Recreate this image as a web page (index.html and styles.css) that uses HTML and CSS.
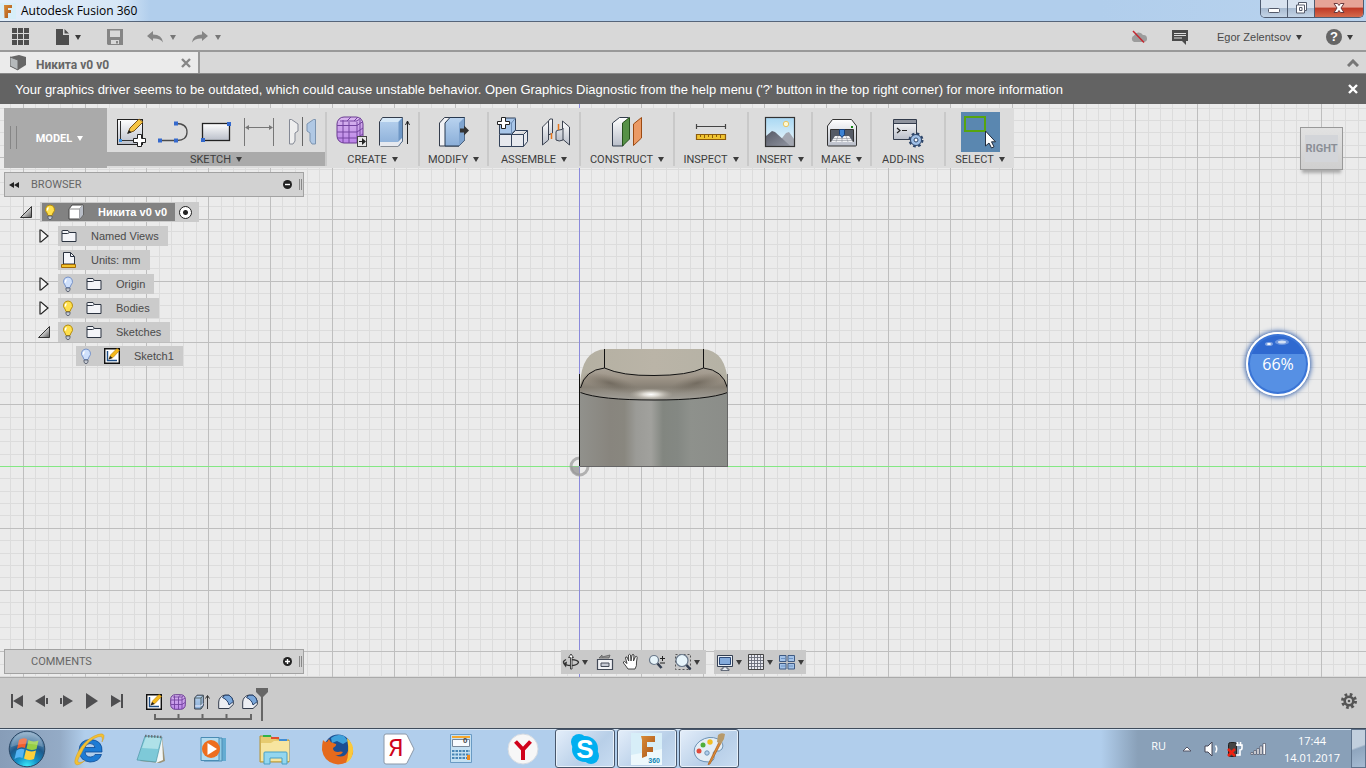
FILE: index.html
```html
<!DOCTYPE html>
<html lang="en">
<head>
    <meta charset="UTF-8">
    <meta name="viewport" content="width=device-width, initial-scale=1.0">
    <title>Autodesk Fusion 360</title>
    <link rel="stylesheet" href="styles.css">
</head>
<body>
    <!-- shared gradients and icons -->
    <svg class="defs" width="0" height="0" aria-hidden="true">
        <defs>
            <linearGradient id="g-white" x1="0" y1="0" x2="0" y2="1"><stop offset="0" stop-color="#fff"/><stop offset="1" stop-color="#b9bec9"/></linearGradient>
            <linearGradient id="g-blue" x1="0" y1="0" x2="0" y2="1"><stop offset="0" stop-color="#b9d3ef"/><stop offset="1" stop-color="#8aaed8"/></linearGradient>
            <linearGradient id="g-purple" x1="0" y1="0" x2="0" y2="1"><stop offset="0" stop-color="#d9b8ee"/><stop offset="1" stop-color="#bb84e8"/></linearGradient>
            <linearGradient id="g-sky" x1="0" y1="0" x2="0" y2="1"><stop offset="0" stop-color="#a9d8f3"/><stop offset="1" stop-color="#eef8fc"/></linearGradient>
            <linearGradient id="g-rock" x1="0" y1="0" x2="1" y2="1"><stop offset="0" stop-color="#565a66"/><stop offset="1" stop-color="#9296a2"/></linearGradient>
            <linearGradient id="g-orange" x1="0" y1="0" x2="1" y2="1"><stop offset="0" stop-color="#d98b35"/><stop offset="1" stop-color="#a9551b"/></linearGradient>
            <linearGradient id="g-tri" x1="0" y1="0" x2="1" y2="1"><stop offset="0.3" stop-color="#fff"/><stop offset="1" stop-color="#555"/></linearGradient>
        </defs>
        <symbol id="i-folder" viewBox="0 0 16 16">
            <path d="M1 13.500V3q0-.5.5-.5H7L8.500 4.500H15v9z" fill="#f3f4f8" stroke="#2b3340"/><path d="M1 5.500h5.500l2-1" fill="none" stroke="#2b3340"/>
        </symbol>
        <symbol id="i-bulb-on" viewBox="0 0 14 16">
            <path d="M7 1a4.600 4.600 0 0 0-3 8l1 2.500h4L10 9a4.600 4.600 0 0 0-3-8z" fill="#ffe04d" stroke="#b58c0c"/><path d="M5.500 3.500q-1.500 1-1 3" stroke="#fff" stroke-width="1.500" fill="none"/><path d="M5 12h4v2l-1 1.500H6L5 14z" fill="#c3c8d1" stroke="#4c5466" stroke-width=".8"/>
        </symbol>
        <symbol id="i-bulb-off" viewBox="0 0 14 16">
            <path d="M7 1a4.600 4.600 0 0 0-3 8l1 2.500h4L10 9a4.600 4.600 0 0 0-3-8z" fill="#cfe0fb" stroke="#7793c9"/><path d="M5.500 3.500q-1.500 1-1 3" stroke="#fff" stroke-width="1.500" fill="none"/><path d="M5 12h4v2l-1 1.500H6L5 14z" fill="#c3c8d1" stroke="#4c5466" stroke-width=".8"/>
        </symbol>
        <symbol id="i-sketch" viewBox="0 0 16 16">
            <path d="M1 1h14v14H1z" fill="#fff"/><path d="M.7.700h14.600v14.600H.7z" fill="none" stroke="#111" stroke-width="1.400"/><path d="M3.500 3v9.500H13" fill="none" stroke="#1f4f87" stroke-width="1.400"/><path d="m5 11 1.500-4L13 .5l2.500 2L9 9.500z" fill="#f5b91b" stroke="#b37908" stroke-width=".6"/><path d="m4.500 11.500 1.700-3.500L8.500 10z" fill="#222"/>
        </symbol>
        <symbol id="i-form" viewBox="0 0 16 16">
            <rect x=".7" y=".7" width="14.600" height="14.600" rx="4.500" fill="url(#g-purple)" stroke="#6a3b91"/><path d="M1 6h11l3-2M1 10.500h11l3-2M4.500 1.500v13.500M8.500 3v12M12 3v12M3 3h9l1.500-2M8.500 3l2-2" fill="none" stroke="#7444a0" stroke-width=".9"/>
        </symbol>
        <symbol id="i-extrude" viewBox="0 0 16 16">
            <path d="M.7 4 3 1.200h6.300v10.500L7 15H.7z" fill="url(#g-blue)" stroke="#333c4c"/><path d="M.7 4H7v11M7 4l2.300-2.800" fill="none" stroke="#566"/><path d="M1 12h6l2-2.500" fill="none" stroke="#eef"/><path d="M13.500 15V2m-2 2.500 2-3 2 3" fill="none" stroke="#333"/>
        </symbol>
        <symbol id="i-fillet" viewBox="0 0 16 16">
            <path d="M.7 14.500V8Q1 3 6 1.200h5Q14.500 3 15.300 7.500v3L11 14.500z" fill="#eceef3" stroke="#333c4c"/><path d="M4.500 3.500 7 1.200h4Q14.500 3 15.300 7.500L11 11q-1-5-6.500-7.500z" fill="#7aa7da" stroke="#27416a"/>
        </symbol>
    </svg>

    <header class="titlebar">
        <svg class="title-icon" width="16" height="16" viewBox="0 0 16 16"><rect width="16" height="16" fill="#d7eef8"/><path d="M4 2h8v3H8v2h3v3H8v5H4.500z" fill="url(#g-orange)"/></svg>
        <span class="title">Autodesk Fusion 360</span>
        <div class="window-buttons">
            <button type="button" aria-label="Minimize"><svg width="14" height="14" viewBox="0 0 14 14"><rect x="1.500" y="6.500" width="11" height="4" rx="1" fill="#fff" stroke="#555b6b"/></svg></button>
            <button type="button" aria-label="Restore"><svg width="14" height="14" viewBox="0 0 14 14"><path d="M4.500.5h8v8h-2V11h-8V3h2z" fill="#fff" stroke="#555b6b"/><path d="M4.500 3h6v5.500M5.500 5.500h2.500v3H5.500z" fill="none" stroke="#555b6b"/></svg></button>
            <button type="button" class="close" aria-label="Close"><svg width="14" height="14" viewBox="0 0 14 14"><path d="M2 1.500h3.500L7 3.500l1.500-2H12L9 6l3 4.500H8.500L7 8.500l-1.500 2H2L5 6z" fill="#fff" stroke="#6b3a3e"/></svg></button>
        </div>
    </header>

    <nav class="appbar">
        <button type="button" class="app-btn grid-btn" aria-label="Data panel"><svg width="18" height="18" viewBox="0 0 18 18"><path d="M0 0h5v5H0zM6 0h5v5H6zM12 0h5v5h-5zM0 6h5v5H0zM6 6h5v5H6zM12 6h5v5h-5zM0 12h5v5H0zM6 12h5v5H6zM12 12h5v5h-5z" fill="#4e4e4e"/></svg></button>
        <button type="button" class="app-btn file-btn" aria-label="File"><svg width="14" height="16" viewBox="0 0 14 16"><path d="M0 0h7v6h6v10H0zM8.500 0 13 4.500H8.500z" fill="#4e4e4e"/></svg><i class="caret"></i></button>
        <button type="button" class="app-btn save-btn" aria-label="Save"><svg width="16" height="16" viewBox="0 0 16 16"><path d="M0 0h16v16H1l-1-1z" fill="#858585"/><path d="M3 1.500h10V8H3zM4 11h8v4H4z" fill="#d8d8d8"/><path d="M9 12h2v2.500H9z" fill="#858585"/></svg></button>
        <button type="button" class="app-btn undo-btn" aria-label="Undo"><svg width="16" height="12" viewBox="0 0 16 12"><path d="M0 5 6 0v3.500q9 0 10 8-3-4.500-10-4V10z" fill="#858585"/></svg><i class="caret faded"></i></button>
        <button type="button" class="app-btn redo-btn" aria-label="Redo"><svg width="16" height="12" viewBox="0 0 16 12"><path d="M16 5 10 0v3.500q-9 0-10 8 3-4.500 10-4V10z" fill="#858585"/></svg><i class="caret faded"></i></button>
        <div class="account">
            <button type="button" class="app-btn" aria-label="Offline"><svg width="18" height="14" viewBox="0 0 18 14"><path d="M4 12a3.500 3.500 0 0 1 0-6.500 5 5 0 0 1 9-.5 3.500 3.500 0 0 1 1 7z" fill="#9c9c9c"/><path d="m3 1 11 11.500" stroke="#c5262f" stroke-width="1.500"/></svg></button>
            <button type="button" class="app-btn" aria-label="Comments"><svg width="16" height="15" viewBox="0 0 16 15"><path d="M0 0h16v11h-2v4l-4-4H0z" fill="#4a4a4a"/><path d="M2 3.500h12M2 5.500h12M2 8h8" stroke="#ddd"/></svg></button>
            <button type="button" class="app-btn user">Egor Zelentsov<i class="caret"></i></button>
            <button type="button" class="app-btn help" aria-label="Help"><span class="help-mark">?</span><i class="caret"></i></button>
        </div>
    </nav>

    <div class="tabs">
        <div class="tab">
            <svg width="16" height="16" viewBox="0 0 16 16"><path d="M0 2 9 0l7 2v8l-8 5-8-4z" fill="#666"/><path d="m0 2 8 3v10l-8-4z" fill="#b5b9bb" stroke="#666"/></svg>
            <span class="tab-name">Никита v0 v0</span>
            <button type="button" aria-label="Close tab"><svg width="10" height="10" viewBox="0 0 10 10"><path d="m1 1 8 8M9 1 1 9" stroke="#868686" stroke-width="2.400"/></svg></button>
        </div>
        <button type="button" class="collapse" aria-label="Collapse"><svg width="12" height="8" viewBox="0 0 12 8"><path d="m1 7 5-5 5 5" fill="none" stroke="#777" stroke-width="3"/></svg></button>
    </div>

    <div class="notice">
        <span>Your graphics driver seems to be outdated, which could cause unstable behavior. Open Graphics Diagnostic from the help menu ('?' button in the top right corner) for more information</span>
        <button type="button" aria-label="Dismiss"><svg width="10" height="10" viewBox="0 0 10 10"><path d="m1 1 8 8M9 1 1 9" stroke="#fff" stroke-width="2.400"/></svg></button>
    </div>

    <main class="canvas">
        <svg class="scene" width="100%" height="100%">
            <defs>
                <linearGradient id="m-side"><stop offset="0" stop-color="#91918c"/><stop offset=".2" stop-color="#88857e"/><stop offset=".3" stop-color="#89877f"/><stop offset=".38" stop-color="#9b9b97"/><stop offset=".48" stop-color="#a1a19d"/><stop offset=".56" stop-color="#828680"/><stop offset=".66" stop-color="#848883"/><stop offset=".75" stop-color="#8e918c"/><stop offset="1" stop-color="#8b8d89"/></linearGradient>
                <linearGradient id="m-top"><stop offset="0" stop-color="#b4b0a2"/><stop offset=".5" stop-color="#bab4a7"/><stop offset="1" stop-color="#b5b2a5"/></linearGradient>
                <linearGradient id="m-band" x1="0" y1="0" x2="0" y2="1"><stop offset="0" stop-color="#aaa398"/><stop offset=".3" stop-color="#9e9588"/><stop offset=".6" stop-color="#878075"/><stop offset="1" stop-color="#a3a09a"/></linearGradient>
                <radialGradient id="m-shine"><stop offset="0" stop-color="#fff"/><stop offset=".35" stop-color="#e4e1da" stop-opacity=".9"/><stop offset="1" stop-color="#b7b1a6" stop-opacity="0"/></radialGradient>
                <radialGradient id="m-dark"><stop offset="0" stop-color="#5e574c" stop-opacity=".6"/><stop offset="1" stop-color="#756e63" stop-opacity="0"/></radialGradient>
            </defs>
            <g id="grid"></g>
            <g id="model" transform="translate(580 362)">
                <circle cx="-.5" cy=".5" r="8.500" fill="none" stroke="#999" stroke-opacity=".7" stroke-width="3"/>
                <path d="M-.5.5v9a9 9 0 0 1-9-9z" fill="#999" fill-opacity=".8"/>
                <path d="M0 .5V-74Q74-58 148-74V.5z" fill="url(#m-side)"/>
                <path d="M0-80Q1-116 26-117H122Q147-116 148-80L123-85H25z" fill="url(#m-top)"/>
                <path d="M25-98Q42-90 74-90.500 108-90.500 123.500-98 145-96 148-76V-73.500Q128-66 74-66 20-66 0-73.500V-78Q2-96 25-98z" fill="url(#m-band)"/>
                <ellipse cx="30" cy="-83" rx="30" ry="8" transform="rotate(14 30 -83)" fill="url(#m-dark)"/>
                <ellipse cx="117" cy="-83" rx="30" ry="8" transform="rotate(-14 117 -83)" fill="url(#m-dark)"/>
                <ellipse cx="71" cy="-71.500" rx="22" ry="6" fill="url(#m-shine)"/>
                <path d="M24.500-117V-98Q42-90 74-90.500 108-90.500 123.500-98V-117M24.500-98Q5-96 .5-78M123.500-98Q143-96 147.500-78M.5-73.500Q20-66 74-66 128-66 147.500-73.500" fill="none" stroke="#111" stroke-width="1"/>
                <path d="M-.5 0V-92" stroke="#111"/>
                <path d="M147.500 0V-92M0 .5H148" stroke="#666" fill="none"/>
            </g>
        </svg>

        <div class="toolbar">
            <button type="button" class="workspace">MODEL<i class="caret"></i></button>
            <section class="group active">
                <div class="tools">
                    <button type="button" aria-label="Create sketch"><svg width="32" height="32" viewBox="0 0 32 32"><rect x="3.500" y="3.500" width="25" height="25" fill="url(#g-white)" stroke="#222"/><path d="M6.500 5v19.500H20" fill="none" stroke="#333"/><path d="M5 23h3v3H5z" fill="#3f8fe0"/><path d="m14 17 2-5 9-9 4 3-9 9z" fill="#f6c543" stroke="#7a5517"/><path d="m13 18 2-4 2.500 2.500z" fill="#222"/><path d="M23.500 18.500h4v4h4v4h-4v4h-4v-4h-4v-4h4z" fill="#fff" stroke="#222"/></svg></button>
                    <button type="button" aria-label="Line"><svg width="32" height="32" viewBox="0 0 32 32"><path d="M3 24.500h17q10 0 10-8.500t-11-8.500" fill="none" stroke="#4b4b4b" stroke-width="1.300"/><path d="M1 22.500h4v4H1zM17 22.500h4v4h-4zM17 5.500h4v4h-4z" fill="#3469cd"/></svg></button>
                    <button type="button" aria-label="Rectangle"><svg width="32" height="32" viewBox="0 0 32 32"><rect x="2.500" y="7.500" width="27" height="17" fill="url(#g-white)" stroke="#222" stroke-width="1.300"/><path d="M1 22h4v4H1zM27 6h4v4h-4z" fill="#3469cd"/></svg></button>
                    <button type="button" aria-label="Dimension"><svg width="32" height="32" viewBox="0 0 32 32"><path d="M1.500 2v28M30.500 2v28M3 11.500h26" stroke="#777" fill="none"/><path d="m2 11.500 4-2.500v5zM30 11.500 26 9v5z" fill="#777"/></svg></button>
                    <button type="button" aria-label="Mirror"><svg width="32" height="32" viewBox="0 0 32 32"><path d="M3.500 3.500h2L12 8v7l-3 2v8l-2 3H3.500z" fill="#eee" stroke="#848995"/><path d="M29.500 3.500h-2L21 8v7l3 2v8l2 3h3.500z" fill="#b0c8e4" stroke="#7c94b0"/><path d="M16.500 1v29" stroke="#666"/></svg></button>
                </div>
                <button type="button" class="group-label">SKETCH<i class="caret"></i></button>
            </section>
            <section class="group">
                <div class="tools">
                    <button type="button" aria-label="Create form"><svg width="32" height="32" viewBox="0 0 32 32"><rect x="2" y="1" width="26" height="26" rx="7" fill="url(#g-purple)" stroke="#6a3b91"/><path d="M2 9.500h20l6-4M2 16h20l6-4M2 22h20l6-4M8 4v23M14 6v21M22 6v21M5 5h17l4-3M12 5l4-4M19 5l4-4M25 4v20" fill="none" stroke="#7444a0"/><rect x="22.500" y="20.500" width="9" height="10" fill="#e6e6e6" stroke="#444"/><path d="M24 25h3v-3l4 3.500-4 3.500v-3h-3z" fill="#222"/></svg></button>
                    <button type="button" aria-label="Extrude"><svg width="32" height="32" viewBox="0 0 32 32"><path d="m1.500 6 3-4.500h20V25l-4 5h-18l-1-1z" fill="url(#g-blue)" stroke="#333c4c"/><path d="m2 6 3-4h19l-4 4z" fill="#d6e8f7"/><path d="M20.500 6v24l4-5V1.500z" fill="#6e97c6"/><path d="M2 26h18l4-4v3l-4 5H2z" fill="#e6e9ef"/><path d="M29.500 28V5m-2 4 2-4 2 4" fill="none" stroke="#222"/></svg></button>
                </div>
                <button type="button" class="group-label">CREATE<i class="caret"></i></button>
            </section>
            <section class="group">
                <div class="tools">
                    <button type="button" aria-label="Press pull"><svg width="32" height="32" viewBox="0 0 32 32"><path d="m1.500 7 5-5.500h20V24l-5.500 6H1.500z" fill="#f1f2f5" stroke="#333c4c"/><path d="m7 7 5-5.500h14.500V24L21 30H7z" fill="url(#g-blue)" stroke="#26384f"/><path d="M21 7v23l5.500-6V1.500z" fill="#7fa4cf"/><path d="M22 12.500h4V9.500l5 5-5 5v-3h-4z" fill="#333"/></svg></button>
                </div>
                <button type="button" class="group-label">MODIFY<i class="caret"></i></button>
            </section>
            <section class="group">
                <div class="tools">
                    <button type="button" aria-label="New component"><svg width="32" height="32" viewBox="0 0 32 32"><path d="m2.500 7 4-5h12v12l-4 4h-12z" fill="#a8c6e9" stroke="#33425a"/><path d="M14.500 18V7l4-5M2.500 7h12" fill="none" stroke="#6f8fb7"/><path d="M2.500 18.500h12v12h-12zM14.500 18.500l4-4h12v11l-4 5h-12zM14.500 18.500h12l4-4M26.500 18.500v12" fill="#e7e9ee" stroke="#33425a"/><path d="M4.500 1.500h4v4h4v3h-4v4h-4v-4h-4v-3h4z" fill="#fff" stroke="#222"/></svg></button>
                    <button type="button" aria-label="Joint"><svg width="32" height="32" viewBox="0 0 32 32"><path d="m2.500 11 6-6v19l-6 5zM22.500 5l7 6v18l-7-6z" fill="url(#g-white)" stroke="#3b4250"/><path d="M8.500 5q1-3 4-2v14l-4 2zM16 16q0-2 3-2 4 0 4-2v12q-4 2-7 0z" fill="url(#g-white)" stroke="#3b4250"/><path d="M11.500 17v6M18.500 8v6" stroke="#e6761c" stroke-width="1.500"/></svg></button>
                </div>
                <button type="button" class="group-label">ASSEMBLE<i class="caret"></i></button>
            </section>
            <section class="group">
                <div class="tools">
                    <button type="button" aria-label="Offset plane"><svg width="32" height="32" viewBox="0 0 32 32"><path d="m1.500 7 7-5.500h9L12 30H1.500z" fill="url(#g-white)" stroke="#333c4c"/><path d="m11.500 7 7-5.500V23l-7 7z" fill="#569146" stroke="#26521c"/><path d="m22.500 8 8-6.500V22l-8 7.500z" fill="#eb9a65" stroke="#9c4a12"/></svg></button>
                </div>
                <button type="button" class="group-label">CONSTRUCT<i class="caret"></i></button>
            </section>
            <section class="group">
                <div class="tools">
                    <button type="button" aria-label="Measure"><svg width="32" height="32" viewBox="0 0 32 32"><path d="M1.500 8v5M30.500 8v5M1.500 10.500h29" stroke="#444" stroke-width="1.200"/><path d="M1.500 18.500h29v5h-29z" fill="#f0c431" stroke="#8e5c0a" stroke-width="1.200"/><path d="M5.500 19v2M9.500 19v3M13.500 19v2M17.500 19v3M21.500 19v2M25.500 19v3" stroke="#8e5c0a"/></svg></button>
                </div>
                <button type="button" class="group-label">INSPECT<i class="caret"></i></button>
            </section>
            <section class="group">
                <div class="tools">
                    <button type="button" aria-label="Insert picture"><svg width="32" height="32" viewBox="0 0 32 32"><rect x="1.500" y="1.500" width="29" height="29" fill="url(#g-sky)"/><circle cx="22" cy="8" r="2.700" fill="#fff8d0" stroke="#e5c568"/><path d="m12 30 10-13 3-1 5 7v7z" fill="#a3a7b1"/><path d="M2 20 8 15l3 1 16 14.500H2z" fill="url(#g-rock)"/><rect x="1.500" y="1.500" width="29" height="29" fill="none" stroke="#333" stroke-width="1.200"/></svg></button>
                </div>
                <button type="button" class="group-label">INSERT<i class="caret"></i></button>
            </section>
            <section class="group">
                <div class="tools">
                    <button type="button" aria-label="3D print"><svg width="32" height="32" viewBox="0 0 32 32"><path d="m1.500 10 5-6.500h19l5 6.500v19q0 1-1 1h-27q-1 0-1-1z" fill="url(#g-white)" stroke="#333"/><path d="M4.500 13.500h23v12h-23z" fill="#555b66" stroke="#333"/><path d="m5 26 4-6h14l4 6z" fill="#f0f1f3"/><path d="M7 22.500h18M6 24.500h20M12 20l-2 6M20 20l2 6M16 20v6" stroke="#8d929b" stroke-width=".6"/><path d="M13.500 13.500h5v5L16 21.500l-2.500-3z" fill="#3c83d4" stroke="#17407b"/><path d="M25 10h2v2h-2z" fill="#148514"/></svg></button>
                </div>
                <button type="button" class="group-label">MAKE<i class="caret"></i></button>
            </section>
            <section class="group">
                <div class="tools">
                    <button type="button" aria-label="Scripts and add-ins"><svg width="32" height="32" viewBox="0 0 32 32"><path d="M1.500 3.500h23v20h-23z" fill="url(#g-white)" stroke="#333c4c"/><path d="M2 4h22v3H2z" fill="#8e939e"/><path d="M2 7.500h22" stroke="#333c4c"/><path d="m5 12 3 2.500L5 17M10 14.500h5" fill="none" stroke="#222" stroke-width="1.200"/><circle cx="24" cy="24" r="6" fill="none" stroke="#2d4569" stroke-width="3" stroke-dasharray="2.500 2.200"/><circle cx="24" cy="24" r="5.500" fill="#9fbfe6" stroke="#2d4569"/><circle cx="24" cy="24" r="2" fill="#fff" stroke="#2d4569"/></svg></button>
                </div>
                <button type="button" class="group-label no-menu">ADD-INS</button>
            </section>
            <section class="group">
                <div class="tools">
                    <button type="button" class="pressed" aria-label="Select"><svg width="32" height="36" viewBox="0 0 32 36"><rect x="1" y="3" width="20" height="14" fill="none" stroke="#57a50e" stroke-width="2"/><path d="M21.500 17v15l3.500-3 2.500 5 2.500-1.200-2.500-5h4z" fill="#fff" stroke="#1f2a3a"/></svg></button>
                </div>
                <button type="button" class="group-label">SELECT<i class="caret"></i></button>
            </section>
        </div>

        <aside class="browser">
            <div class="panel-head">
                <svg width="10" height="6" viewBox="0 0 10 6"><path d="M5 0v6L0 3zM10 0v6L5 3z" fill="#222"/></svg>
                <h2>BROWSER</h2>
                <button type="button" aria-label="Collapse browser"><svg width="9" height="9" viewBox="0 0 9 9"><circle cx="4.500" cy="4.500" r="4.500" fill="#222"/><path d="M2 4.500h5" stroke="#fff" stroke-width="1.400"/></svg></button>
                <span class="grip"></span>
            </div>
            <ul class="tree">
                <li>
                    <div class="row">
                        <button type="button" class="twisty" aria-label="Collapse"><svg width="12" height="12" viewBox="0 0 12 12"><path d="M11.500.5v11H.5z" fill="url(#g-tri)" stroke="#333"/></svg></button>
                        <div class="chip root">
                            <span class="root-name">
                                <svg class="bulb"><use href="#i-bulb-on"/></svg>
                                <svg class="icon" viewBox="0 0 16 16"><path d="M1 5 4 1h11v10l-3.500 4H1z" fill="#fff" stroke="#444"/><path d="M1 5h10.500v10M11.500 5 15 1" fill="none" stroke="#888"/><path d="M11.500 5 15 1v10l-3.500 4z" fill="#b9bec8"/></svg>
                                Никита v0 v0
                            </span>
                            <input type="radio" name="active" aria-label="Activate component" checked>
                        </div>
                    </div>
                    <ul>
                        <li><div class="row"><button type="button" class="twisty" aria-label="Expand"><svg width="10" height="14" viewBox="0 0 10 14"><path d="M1 1h1l7 6-7 6H1z" fill="#f4f4f4" stroke="#222" stroke-width="1.200"/></svg></button><div class="chip"><svg class="icon"><use href="#i-folder"/></svg>Named Views</div></div></li>
                        <li><div class="row"><span class="twisty"></span><div class="chip"><svg class="icon" viewBox="0 0 16 16"><path d="M2.500 12V.5h7l4 4V12z" fill="#f5f6fa" stroke="#2b3340"/><path d="M9.500.5v4h4" fill="none" stroke="#2b3340"/><path d="M.5 12.500h14v3H.5z" fill="#f3c22b" stroke="#a36c08"/></svg>Units: mm</div></div></li>
                        <li><div class="row"><button type="button" class="twisty" aria-label="Expand"><svg width="10" height="14" viewBox="0 0 10 14"><path d="M1 1h1l7 6-7 6H1z" fill="#f4f4f4" stroke="#222" stroke-width="1.200"/></svg></button><div class="chip"><svg class="bulb"><use href="#i-bulb-off"/></svg><svg class="icon"><use href="#i-folder"/></svg>Origin</div></div></li>
                        <li><div class="row"><button type="button" class="twisty" aria-label="Expand"><svg width="10" height="14" viewBox="0 0 10 14"><path d="M1 1h1l7 6-7 6H1z" fill="#f4f4f4" stroke="#222" stroke-width="1.200"/></svg></button><div class="chip"><svg class="bulb"><use href="#i-bulb-on"/></svg><svg class="icon"><use href="#i-folder"/></svg>Bodies</div></div></li>
                        <li>
                            <div class="row"><button type="button" class="twisty" aria-label="Collapse"><svg width="12" height="12" viewBox="0 0 12 12"><path d="M11.500.5v11H.5z" fill="url(#g-tri)" stroke="#333"/></svg></button><div class="chip"><svg class="bulb"><use href="#i-bulb-on"/></svg><svg class="icon"><use href="#i-folder"/></svg>Sketches</div></div>
                            <ul>
                                <li><div class="row"><span class="twisty"></span><div class="chip"><svg class="bulb"><use href="#i-bulb-off"/></svg><svg class="icon"><use href="#i-sketch"/></svg>Sketch1</div></div></li>
                            </ul>
                        </li>
                    </ul>
                </li>
            </ul>
        </aside>

        <div class="panel-head comments">
            <h2>COMMENTS</h2>
            <button type="button" aria-label="Add comment"><svg width="9" height="9" viewBox="0 0 9 9"><circle cx="4.500" cy="4.500" r="4.500" fill="#222"/><path d="M2 4.500h5M4.500 2v5" stroke="#fff" stroke-width="1.400"/></svg></button>
            <span class="grip"></span>
        </div>

        <button type="button" class="viewcube"><span>RIGHT</span></button>
        <div class="memory"><span>66%</span><svg width="30" height="12" viewBox="0 0 30 12"><ellipse cx="8" cy="7" rx="4" ry="2" fill="#fff" fill-opacity=".4"/><ellipse cx="8" cy="7" rx="2" ry="1" fill="#fff"/><ellipse cx="21" cy="5" rx="7" ry="3" fill="#fff" fill-opacity=".3"/><ellipse cx="21" cy="5" rx="4" ry="1.500" fill="#fff" fill-opacity=".7"/></svg></div>

        <div class="navbar">
            <div class="nav-group">
                <button type="button" aria-label="Orbit"><svg width="18" height="18" viewBox="0 0 18 18"><path d="M4 6.500Q1 8 1.500 9.500 3 12.500 9 12.500t7.500-3Q16.500 7 9 6.500" fill="none" stroke="#333" stroke-width="1.300"/><path d="m5 8.500-1 6-3-4z" fill="#333"/><path d="M9 1 6.500 4.500h2V16h1.500V4.500h1.500z" fill="#fff" stroke="#333" stroke-width=".9"/></svg><i class="caret"></i></button>
                <button type="button" aria-label="Look at"><svg width="18" height="18" viewBox="0 0 18 18"><path d="M1.500 6.500h15v10h-15z" fill="#f1f2f5" stroke="#444b58" stroke-width="1.200"/><path d="M5 10h8v3.500H5z" fill="#c8ccd6" stroke="#444b58"/><path d="M3 5 6 2v2l8-2-1 3z" fill="#999" stroke="#555" stroke-width=".7"/></svg></button>
                <button type="button" aria-label="Pan"><svg width="18" height="18" viewBox="0 0 18 18"><path d="M6 16Q4 13 1.500 10 1 8.500 2.500 8.500L5 10.500 3.500 5Q3.500 3.500 5 4l1.700 4L6.500 2Q7.500.7 8.500 2l.5 6 1-6q1-1.300 2 0L11.500 8l2-4.500q1.500-.7 1.700.8L14.500 9Q15 13 13 16z" fill="#fff" stroke="#333" stroke-width=".9"/></svg></button>
                <button type="button" aria-label="Zoom"><svg width="18" height="18" viewBox="0 0 18 18"><circle cx="6" cy="7" r="4.500" fill="#e7f4fa" stroke="#69788a" stroke-width="1.200"/><path d="m9.500 10.500 4 4.500" stroke="#333e50" stroke-width="2.600"/><path d="M12 5.500h5M14.500 3v5M12 10h5" stroke="#222"/></svg></button>
                <button type="button" aria-label="Fit"><svg width="18" height="18" viewBox="0 0 18 18"><path d="M1.500 1.500h15v15h-15z" fill="none" stroke="#555" stroke-dasharray="2 2"/><circle cx="8" cy="7.500" r="6" fill="#e7f4fa" stroke="#69788a" stroke-width="1.200"/><path d="m12.500 12 4 4.500" stroke="#333e50" stroke-width="2.600"/></svg><i class="caret"></i></button>
            </div>
            <div class="nav-group">
                <button type="button" aria-label="Display settings"><svg width="18" height="18" viewBox="0 0 18 18"><path d="M1.500 2.500h15v11h-15z" fill="#e8edf3" stroke="#333e50"/><path d="M3.500 4.500h11v7h-11z" fill="#84abdc" stroke="#2b4978"/><path d="M7 14h4v2h2v1.500H5V16h2z" fill="#e8edf3" stroke="#333e50" stroke-width=".7"/></svg><i class="caret"></i></button>
                <button type="button" aria-label="Grid and snaps"><svg width="18" height="18" viewBox="0 0 18 18"><path d="M1.500 1.500h15v15h-15z" fill="#e9eaf0" stroke="#444"/><path d="M4.500 2v14M7.500 2v14M10.500 2v14M13.500 2v14M2 4.500h14M2 7.500h14M2 10.500h14M2 13.500h14" stroke="#666a76" stroke-width=".9"/></svg><i class="caret"></i></button>
                <button type="button" aria-label="Viewports"><svg width="18" height="18" viewBox="0 0 18 18"><path d="M1.500 2.500h6.500v6h-6.500zM10 2.500h6.500v6H10zM1.500 10.500h6.500v5.500h-6.500zM10 10.500h6.500v5.500H10z" fill="#a3c2e8" stroke="#3f5a83"/><path d="M3 5.500h4M11 5.500h4M3 13h4M11 13h4" stroke="#6c92c4"/></svg><i class="caret"></i></button>
            </div>
        </div>
    </main>

    <footer class="timeline">
        <div class="player">
            <button type="button" aria-label="Go to start"><svg width="14" height="14" viewBox="0 0 14 14"><path d="M1 0h2v14H1zM13 1v12L3 7z" fill="#4e4e50"/></svg></button>
            <button type="button" aria-label="Step back"><svg width="14" height="14" viewBox="0 0 14 14"><path d="M10 1v12L0 7zM11 4h2v6h-2z" fill="#4e4e50"/></svg></button>
            <button type="button" aria-label="Step forward"><svg width="14" height="14" viewBox="0 0 14 14"><path d="M3 1v12l10-6zM0 4h2v6H0z" fill="#4e4e50"/></svg></button>
            <button type="button" aria-label="Play"><svg width="14" height="16" viewBox="0 0 14 16"><path d="M1 0v16l12-8z" fill="#4e4e50"/></svg></button>
            <button type="button" aria-label="Go to end"><svg width="14" height="14" viewBox="0 0 14 14"><path d="M11 0h2v14h-2zM1 1v12l10-6z" fill="#4e4e50"/></svg></button>
        </div>
        <div class="features">
            <div class="feature-row">
                <button type="button" aria-label="Sketch1"><svg><use href="#i-sketch"/></svg></button>
                <button type="button" aria-label="Form"><svg><use href="#i-form"/></svg></button>
                <button type="button" aria-label="Extrude"><svg><use href="#i-extrude"/></svg></button>
                <button type="button" aria-label="Fillet"><svg><use href="#i-fillet"/></svg></button>
                <button type="button" aria-label="Fillet"><svg><use href="#i-fillet"/></svg></button>
            </div>
            <svg class="ruler" width="98" height="6" viewBox="0 0 98 6"><path d="M1 0v5h96V0M24.500 0v5M48.500 0v5M72.500 0v5" fill="none" stroke="#666" stroke-width="2"/></svg>
            <svg class="marker" width="12" height="33" viewBox="0 0 12 33"><path d="M0 0h12v4L7 9v24H5V9L0 4z" fill="#666"/></svg>
        </div>
        <button type="button" class="settings" aria-label="Settings"><svg width="18" height="18" viewBox="0 0 18 18"><circle cx="9" cy="9" r="6.500" fill="none" stroke="#555" stroke-width="3" stroke-dasharray="2.600 2.500"/><circle cx="9" cy="9" r="4.300" fill="none" stroke="#555" stroke-width="2.600"/><circle cx="9" cy="9" r="1.300" fill="#555"/></svg></button>
    </footer>

    <div class="taskbar">
        <button type="button" class="start" aria-label="Start"><svg width="38" height="38" viewBox="0 0 38 38">
            <defs><radialGradient id="orb" cx=".5" cy="1" r="1"><stop offset="0" stop-color="#3cf0fb"/><stop offset=".3" stop-color="#1593c9"/><stop offset=".6" stop-color="#1d5a8c"/><stop offset="1" stop-color="#8fadc8"/></radialGradient></defs>
            <circle cx="19" cy="19" r="17.800" fill="url(#orb)" stroke="#2a4765"/>
            <path d="M11 10q4-3 8-1l-2 9q-4-2-8 1z" fill="#f0602f"/><path d="M20.500 10q4 2.500 10 .5l-2 8.500q-5.500 2-10-.5z" fill="#97cf43"/><path d="M8.500 20.500q4-3 8-1l-2 8.500q-4-2-8 1z" fill="#55b4f4"/><path d="M18 20q4.500 2.500 10 .5L26 29q-5.500 2-10-.5z" fill="#ffd03b"/>
            <path d="M3 17Q5 3 19 2.500 33 3 35 17 19 10 3 17z" fill="#fff" fill-opacity=".2"/></svg></button>
        <button type="button" class="task" aria-label="Internet Explorer"><svg width="34" height="34" viewBox="0 0 34 34"><path d="M30 20H13q.5 5 5.500 5 3.500 0 4.500-2.500h6.500Q27 30 18 30 7.500 29 7 18.500 7.500 8 18 7.500 31 8 30 20zM13 15.500h10q-.5-4-5-4t-5 4z" fill="#1d7bd4" stroke="#0c4a95" stroke-width=".8"/><path d="M9 22Q3 31 8 30.500q2 0 5-2-5 4.500-8 4.500-5-1 1-13Q12 9 22 4q9-4 10-.5.500 2.500-2 6.500 1-5-1-5.500-2-.5-7 2Q13 12 9 22z" fill="#f3c033" stroke="#c9921a" stroke-width=".4"/></svg></button>
        <button type="button" class="task" aria-label="Notepad"><svg width="34" height="34" viewBox="0 0 34 34"><path d="m28 5 3 24-5 2-20-2z" fill="#9c9478"/><path d="M10 5 28 4l1 24-7 3z" fill="#f3f7f7"/><path d="m11 4 17 1-6 25-19-2z" fill="#7ec9d8" stroke="#4d97a6" stroke-width=".7"/><path d="m12 5 15 1-3 11L8 16z" fill="#c4ebf0" fill-opacity=".7"/><path d="m11 4 17 1" stroke="#6a7076" stroke-width="2.500" stroke-dasharray="1.500 1.500"/></svg></button>
        <button type="button" class="task" aria-label="Media Player"><svg width="34" height="34" viewBox="0 0 34 34"><path d="M10 6h20v23H10z" fill="#64acd2"/><path d="M8 6h18v23H8z" fill="#91cbe4" stroke="#4a8cb4"/><path d="M5 5.500h18v23H5z" fill="#b3dcef" stroke="#4a8cb4"/><circle cx="15" cy="17" r="9" fill="#ee6e1e"/><path d="m11.500 11 9.500 6-9.500 6z" fill="#fff"/></svg></button>
        <button type="button" class="task" aria-label="Explorer"><svg width="34" height="34" viewBox="0 0 34 34"><path d="M2 4h10l3 2 10 2h6v22H2z" fill="#e7cb70" stroke="#b59438"/><path d="M5 3h8v2H5z" fill="#2fb34a"/><path d="M13 5h8v2h-8z" fill="#e04d2f"/><path d="M21 7h8v2h-8z" fill="#408dd5"/><path d="M3 11h10l3-2h15v20H3z" fill="#f7e5a0"/><path d="M6 32V21q0-1 1-1h21q1 0 1 1v11h-5v-6H12v6z" fill="#93d6ef" stroke="#499fc5"/></svg></button>
        <button type="button" class="task" aria-label="Firefox"><svg width="34" height="34" viewBox="0 0 34 34"><circle cx="18" cy="16" r="13.500" fill="#1d4f92"/><path d="M11 6q6-5 13-2l4 5-5 3-6-3-5 2z" fill="#3fa2db"/><path d="M3 8q1 2 4 2l2-3q1 3 4 4l3 1q1 2-3 4 0 4 5 4 3-1 5 0-3 4-8 3 8 4 12-2Q30 16 28 9q6 6 5 12-3 11-15 11.500Q4 31 2 18 2 12 3 8z" fill="#e56a1c"/><path d="M27 6q7 6 6 14-1 8-7 11 4-9 1-25z" fill="#fbc93b"/></svg></button>
        <button type="button" class="task" aria-label="Yandex"><svg width="34" height="34" viewBox="0 0 34 34"><path d="M4 2h19q1.500 0 2 1l7 14-7 14q-.5 1-2 1H4q-2 0-2-2V4q0-2 2-2z" fill="#fff" stroke="#8b98a8"/></svg><span class="ya">Я</span></button>
        <button type="button" class="task" aria-label="Calculator"><svg width="34" height="34" viewBox="0 0 34 34"><path d="M6.500 2.500h21v28h-21z" fill="#c4e0f2" stroke="#6a9bc4"/><path d="M8 4h18v2H8z" fill="#f6a82e"/><path d="M8.500 7.500h17v7h-17z" fill="#f7fbfe" stroke="#789"/><path d="M8 19h18M8 22.500h18M8 26h18" stroke="#4986b5" stroke-width="2" stroke-dasharray="2.500 1"/><path d="M23 23h3v5h-3z" fill="#f08a1c"/></svg><span class="digit">0</span></button>
        <button type="button" class="task" aria-label="Yandex Browser"><svg width="34" height="34" viewBox="0 0 34 34"><circle cx="17" cy="17" r="15" fill="#f7f7f7" stroke="#d5dbe2"/><path d="m9.500 9.500 7.500 8 7.500-8M17 17v11" fill="none" stroke="#d0021b" stroke-width="4"/></svg></button>
        <button type="button" class="task open" aria-label="Skype"><svg width="34" height="34" viewBox="0 0 34 34"><circle cx="17" cy="17" r="13" fill="#00aff0"/><circle cx="11" cy="10" r="8" fill="#00aff0"/><circle cx="23" cy="24" r="8" fill="#00aff0"/></svg><span class="skype">S</span></button>
        <button type="button" class="task open" aria-label="Fusion 360"><svg width="34" height="34" viewBox="0 0 34 34"><path d="M1 1h31v32H1z" fill="#d7eef8"/><path d="M1 23 32 17v16H1z" fill="#edf8fc"/><path d="M11 4h14v6h-8v5h6v5h-6v4l-5 2V8z" fill="url(#g-orange)"/></svg><span class="f360">360</span></button>
        <button type="button" class="task open" aria-label="Paint"><svg width="34" height="34" viewBox="0 0 34 34"><path d="M3 23Q0 15 8 9q9-6 18-2 7 4 4 10-2 3-7 2-3 1-1 5 1 5-5 6Q6 30 3 23z" fill="#e4edf5" stroke="#6d93b5"/><circle cx="7" cy="19" r="2.500" fill="#e04b3b"/><circle cx="11" cy="13" r="2.500" fill="#4fae39"/><circle cx="18" cy="10" r="2.700" fill="#f2bd22"/><circle cx="15" cy="21" r="2.200" fill="#b1ceec" stroke="#6d93b5"/><path d="m27 10 2 1-11 21-2 .5z" fill="#e08a36" stroke="#a65c18" stroke-width=".7"/><path d="m25 10 1-7q3-3 7-1l-1 5-3 5z" fill="#b79a6b"/></svg></button>
        <div class="tray">
            <span class="lang">RU</span>
            <button type="button" aria-label="Hidden icons"><svg width="10" height="6" viewBox="0 0 10 6"><path d="M1 5 5 1l4 4z" fill="#fff" stroke="#556"/></svg></button>
            <button type="button" aria-label="Volume"><svg width="16" height="18" viewBox="0 0 16 18"><path d="M1 6h3l4-4v14l-4-4H1z" fill="#fff" stroke="#445"/><path d="M11.500 5.500q2.500 3.500 0 7" fill="none" stroke="#fff" stroke-width="1.500"/></svg></button>
            <button type="button" aria-label="Power"><svg width="16" height="18" viewBox="0 0 16 18"><rect x="1.500" y="2.500" width="8" height="14" rx="2" fill="#444" stroke="#222"/><path d="M9 5h6v3q0 2-2 2v5H9M10.500 2v4M13.500 2v4" fill="none" stroke="#fff" stroke-width="1.600"/><path d="m1 9 7 7M8 9l-7 7" stroke="#e21" stroke-width="2.500"/></svg></button>
            <button type="button" aria-label="Network"><svg width="17" height="14" viewBox="0 0 17 14"><path d="M1 10.500h2v2H1zM4 8.500h2v4H4zM7 6.500h2v6H7zM10 4h2v8.500h-2zM13 1.500h2.500v11H13z" fill="#fff" stroke="#445" stroke-width=".6"/></svg></button>
            <div class="clock"><time>17:44</time><span>14.01.2017</span></div>
            <button type="button" class="show-desktop" aria-label="Show desktop"></button>
        </div>
    </div>

    <script>
        // Sketch plane grid, drawn outward from the origin
        const NS = 'http://www.w3.org/2000/svg';
        const scene = document.querySelector('.scene');
        const grid = document.getElementById('grid');
        const origin = { x: 579, y: 362 };
        const step = 61.8 / 5;

        function addLine(x1, y1, x2, y2, color) {
            const line = document.createElementNS(NS, 'line');
            line.setAttribute('x1', x1);
            line.setAttribute('y1', y1);
            line.setAttribute('x2', x2);
            line.setAttribute('y2', y2);
            line.setAttribute('stroke', color);
            grid.appendChild(line);
        }

        function drawGrid() {
            const w = scene.clientWidth;
            const h = scene.clientHeight;
            grid.innerHTML = '';
            for (const major of [false, true]) {
                const color = major ? '#bebebe' : '#dcdcdc';
                for (let i = Math.ceil(-origin.x / step); origin.x + i * step < w; i++) {
                    const x = Math.round(origin.x + i * step) + 0.5;
                    if ((i % 5 === 0) === major) addLine(x, 0, x, h, color);
                }
                for (let i = Math.ceil(-origin.y / step); origin.y + i * step < h; i++) {
                    const y = Math.round(origin.y + i * step) + 0.5;
                    if ((i % 5 === 0) === major) addLine(0, y, w, y, color);
                }
            }
            addLine(0, origin.y + 0.5, w, origin.y + 0.5, '#83e883');
            addLine(origin.x + 0.5, 0, origin.x + 0.5, h, '#8a8adb');
        }

        window.addEventListener('resize', drawGrid);
        drawGrid();
    </script>
</body>
</html>
```
FILE: styles.css
```css
* {
    box-sizing: border-box;
}
body {
    display: flex;
    flex-direction: column;
    min-height: 100vh;
    margin: 0;
    font-family: "Liberation Sans", Arial, sans-serif;
    font-size: 11px;
    color: #4a4a4a;
    background: #ebebeb;
}
button {
    display: flex;
    align-items: center;
    justify-content: center;
    margin: 0;
    padding: 0;
    border: 0;
    background: none;
    color: inherit;
    font: inherit;
}
svg {
    display: block;
    flex: none;
}
ul {
    list-style: none;
    margin: 0;
    padding: 0;
}
.defs {
    position: absolute;
}
.caret {
    width: 0;
    height: 0;
    margin-left: 5px;
    border: 3px solid transparent;
    border-top: 5px solid #3c3c3c;
    border-bottom: 0;
}
.caret.faded {
    border-top-color: #777;
}

/* title bar */
.titlebar {
    display: flex;
    align-items: center;
    height: 22px;
    border-bottom: 1px solid #56657a;
    background: linear-gradient(90deg, #e2eefa 0, #d6e6f6 120px, #b1ceec 150px, #b1ceec 1100px, #b9d3ee);
    font-family: "Open Sans", "Noto Sans", sans-serif;
    font-size: 12px;
    color: #000;
}
.title {
    margin-left: 5px;
}
.window-buttons {
    display: flex;
    align-self: flex-start;
    height: 18px;
    margin: 0 2px 0 auto;
    border: 1px solid #4f5c70;
    border-top: 0;
    border-radius: 0 0 5px 5px;
    overflow: hidden;
}
.window-buttons button {
    width: 27px;
    background: linear-gradient(#d7e2ef 45%, #a8bbd1 50%, #c4d4e6);
    border-right: 1px solid #4f5c70;
}
.window-buttons .close {
    width: 48px;
    border: 0;
    background: linear-gradient(#e6a497 40%, #c03c28 50%, #d56a4c);
}

/* application bar */
.appbar {
    display: flex;
    align-items: center;
    height: 30px;
    padding: 2px 13px 0 12px;
    border-bottom: 2px solid #999;
    background: #d8d8d8;
}
.file-btn {
    margin-left: 26px;
}
.save-btn {
    margin-left: 26px;
}
.undo-btn {
    margin-left: 24px;
}
.redo-btn {
    margin-left: 16px;
}
.undo-btn .caret,
.redo-btn .caret {
    margin-left: 7px;
}
.account {
    display: flex;
    align-items: center;
    gap: 24px;
    margin-left: auto;
}
.user {
    margin-left: 5px;
}
.help-mark {
    width: 16px;
    height: 16px;
    border-radius: 8px;
    background: #666;
    color: #fff;
    font-size: 13px;
    font-weight: bold;
    line-height: 16px;
}

/* document tabs */
.tabs {
    display: flex;
    justify-content: space-between;
    height: 22px;
    border-bottom: 1px solid #888;
    background: #d8d8d8;
}
.tab {
    display: flex;
    align-items: center;
    width: 200px;
    padding: 0 7px 0 10px;
    border-right: 2px solid #999;
    background: #ebebeb;
}
.tab-name {
    flex: 1;
    margin: 4px 0 0 10px;
    font-family: Roboto, "Liberation Sans", sans-serif;
    font-size: 12px;
    font-weight: bold;
    color: #666;
}
.collapse {
    width: 26px;
}
.notice {
    display: flex;
    align-items: center;
    justify-content: space-between;
    height: 30px;
    padding: 0 8px 0 15px;
    background: #636363;
    color: #fff;
    font-size: 13px;
}

/* canvas */
.canvas {
    position: relative;
    flex: 1;
    min-height: 560px;
    overflow: hidden;
}
.scene {
    position: absolute;
    inset: 0;
}
.toolbar {
    position: absolute;
    top: 4px;
    left: 4px;
    display: grid;
    grid-template-columns: 103px 220px 93px 69px 92px 94px 74px 64px 59px 74px 68px;
    height: 60px;
    background: #dcdcdc;
    font-family: Roboto, "Liberation Sans", sans-serif;
}
.workspace {
    position: relative;
    border-left: 8px solid #aaa;
    background: #aaa;
    color: #fff;
    font-weight: bold;
}
.workspace::before {
    content: "";
    position: absolute;
    left: -2px;
    top: 18px;
    width: 5px;
    height: 23px;
    border: 1px solid #868686;
    border-width: 0 1px;
}
.workspace .caret {
    border-top-color: #fff;
}
.group {
    display: flex;
    flex-direction: column;
    margin: 4px 0 2px;
    border-right: 2px solid #c9c9c9;
}
.group:last-child {
    border: 0;
}
.tools {
    display: flex;
    justify-content: center;
    height: 40px;
}
.tools button {
    width: 43px;
}
.tools .pressed {
    width: 39px;
    background: #5a87b0;
}
.group-label {
    height: 14px;
    color: #3c3c3c;
}
.group-label.no-menu {
    padding-right: 10px;
}
.group.active .group-label {
    background: #aaa;
}

/* browser panel */
.browser {
    position: absolute;
    top: 68px;
    left: 4px;
    width: 300px;
}
.panel-head {
    display: flex;
    align-items: center;
    height: 25px;
    padding: 0 1px 0 4px;
    border: 1px solid #a2a2a2;
    background: #d2d2d2;
}
.panel-head h2 {
    flex: 1;
    margin: 0 0 0 12px;
    font-family: Roboto, "Liberation Sans", sans-serif;
    font-size: 11px;
    font-weight: normal;
    color: #666;
}
.grip {
    width: 3px;
    height: 11px;
    margin-left: 7px;
    border: 1px solid #888;
    border-width: 0 1px;
}
.comments {
    position: absolute;
    left: 4px;
    bottom: 3px;
    width: 300px;
    padding-left: 14px;
}
.tree {
    margin-top: 5px;
    padding-left: 12px;
}
.tree ul {
    padding-left: 18px;
}
.row {
    display: flex;
    align-items: center;
    height: 20px;
    margin-bottom: 4px;
}
.twisty {
    width: 24px;
    padding-right: 4px;
}
.chip {
    display: flex;
    align-items: center;
    height: 20px;
    padding: 0 9px 0 3px;
    background: #cbcbcb;
}
.bulb {
    width: 14px;
    height: 16px;
    margin-right: 11px;
}
.icon {
    width: 16px;
    height: 16px;
    margin-right: 14px;
}
.chip.root {
    padding: 0 7px 0 2px;
}
.root-name {
    display: flex;
    align-items: center;
    height: 18px;
    padding: 0 8px 0 1px;
    background: #828282;
    color: #fff;
    font-weight: bold;
}
.root input {
    appearance: none;
    width: 13px;
    height: 13px;
    margin: 0 0 0 4px;
    border: 1px solid #222;
    border-radius: 50%;
    background: radial-gradient(circle, #222 2px, #fff 3px);
}

.viewcube {
    position: absolute;
    top: 23px;
    right: 23px;
    width: 43px;
    height: 43px;
    border: 1px solid #999;
    background: linear-gradient(#e2e2e2, #cfcfcf);
    box-shadow: 0 5px 3px -2px #aaa;
    color: #8b8f96;
    font-family: Roboto, "Liberation Sans", sans-serif;
    font-size: 11px;
    font-weight: bold;
}
.viewcube span {
    padding: 7px 0;
    background: #d3d5d9;
}
.memory {
    position: absolute;
    top: 228px;
    right: 56px;
    width: 64px;
    height: 64px;
    border: 2px solid #fff;
    border-radius: 50%;
    background: linear-gradient(#2f69d0 20px, #5690e4 20px);
    box-shadow: 0 0 5px 1px #2f5ca8, inset 0 0 0 2px #3b75d6;
    color: #fff;
    font-family: "Open Sans", "Noto Sans", sans-serif;
    font-size: 16px;
    line-height: 60px;
    text-align: center;
}
.memory svg {
    position: absolute;
    top: 3px;
    left: 13px;
}

/* navigation bar */
.navbar {
    position: absolute;
    right: 0;
    bottom: 3px;
    left: 0;
    display: flex;
    justify-content: center;
    gap: 8px;
    pointer-events: none;
}
.nav-group {
    display: flex;
    align-items: center;
    gap: 8px;
    height: 24px;
    padding: 0 6px 0 1px;
    background: #c9c9c9;
    pointer-events: auto;
}
.nav-group + .nav-group {
    gap: 5px;
    padding: 0 2px;
}
.nav-group .caret {
    margin-left: 2px;
}

/* timeline */
.timeline {
    display: flex;
    height: 51px;
    padding: 0 8px 0 10px;
    border-top: 1px solid #aaa;
    background: #cbcbcb;
}
.player {
    display: flex;
    align-items: center;
    gap: 11px;
    height: 46px;
}
.features {
    position: relative;
    margin-left: 22px;
}
.feature-row {
    display: flex;
    gap: 8px;
    padding-top: 16px;
}
.feature-row svg {
    width: 16px;
    height: 16px;
}
.ruler {
    margin: 4px 0 0 8px;
}
.marker {
    position: absolute;
    top: 10px;
    right: -10px;
}
.settings {
    height: 46px;
    margin-left: auto;
}

/* taskbar */
.taskbar {
    display: flex;
    height: 40px;
    border-top: 1px solid #3f4c5c;
    background: linear-gradient(90deg, #879db8 0, #94abc6 60px, #b1ceec 85px, #b1ceec calc(100% - 265px), #89a0b8 calc(100% - 228px));
    box-shadow: inset 0 1px #d3e3f3;
}
.start {
    width: 54px;
    margin-right: 5px;
}
.task {
    position: relative;
    width: 60px;
    margin-right: 2px;
}
.task.open {
    border: 1px solid #47566b;
    border-radius: 3px;
    background: linear-gradient(135deg, #e4eefa, #b8cfe8 60%, #c8dcf1);
    box-shadow: inset 0 0 0 1px #e8f1fa;
}
.ya,
.digit,
.skype,
.f360 {
    position: absolute;
    font-weight: bold;
}
.ya {
    inset: 0 6px 0 0;
    font-family: Roboto, "Liberation Sans", sans-serif;
    font-size: 24px;
    font-weight: normal;
    line-height: 39px;
    color: #d0021b;
}
.digit {
    top: 7px;
    left: 32px;
    font-size: 8px;
}
.skype {
    inset: 0;
    font-size: 26px;
    line-height: 38px;
    color: #fff;
}
.f360 {
    right: 16px;
    bottom: 3px;
    font-size: 7px;
    color: #0d84b5;
}
.tray {
    display: flex;
    align-items: center;
    margin-left: auto;
    color: #fff;
    font-family: "Open Sans", "Noto Sans", sans-serif;
}
.lang {
    margin: 0 16px 6px 0;
}
.tray button + button {
    margin-left: 12px;
}
.tray button + button + button {
    margin-left: 7px;
}
.clock {
    width: 78px;
    margin-left: 6px;
    text-align: center;
    line-height: 17px;
}
.clock time,
.clock span {
    display: block;
}
.show-desktop {
    align-self: stretch;
    width: 15px;
    border: 1px solid #5f738c;
    background: linear-gradient(160deg, #c2cfdd 45%, #8fa5be 50%, #a6bbd2);
}
```
